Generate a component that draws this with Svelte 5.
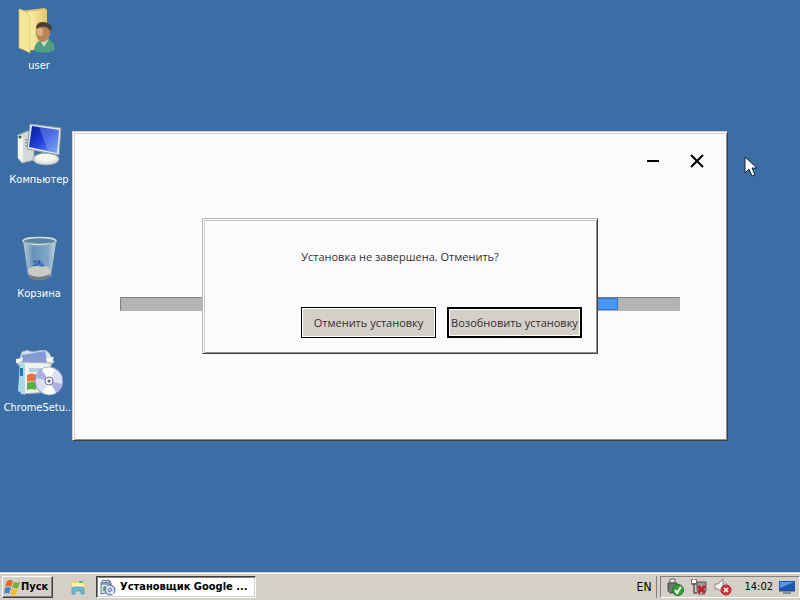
<script lang="ts">
    const shortcuts = [
        { id: 'user', label: 'user' },
        { id: 'computer', label: 'Компьютер' },
        { id: 'bin', label: 'Корзина' },
        { id: 'setup', label: 'ChromeSetu...' }
    ];

    // Position of the moving block, in percent of the track
    let block = $state({ start: 72, width: 17 });
</script>

<div class="desktop">
    <main class="workspace">
        <nav class="shortcuts">
            {#each shortcuts as item}
                <button class="shortcut">
                    <svg width="48" height="48" viewBox="0 0 48 48" aria-hidden="true">
                        {#if item.id === 'user'}
                            <defs>
                                <linearGradient id="folder" x2="1" y2="0">
                                    <stop offset="0" stop-color="#fbf3b5" />
                                    <stop offset="1" stop-color="#e5c766" />
                                </linearGradient>
                            </defs>
                            <path d="M5 3 30 0l2 2v38l-20 3z" fill="#e4c668" />
                            <path d="M13 4 31 2v38l-16 2z" fill="url(#folder)" />
                            <path d="M4 1q8 2 11 8v36q-7-4-11-5z" fill="#f5e69a" stroke="#d9bd60" stroke-width=".7" />
                            <path d="M19 43q0-8 7-11l9 0q5 3 5 10-10 5-21 1z" fill="#529e83" />
                            <path d="m25 32 4 7 5-8z" fill="#c8e0c9" />
                            <ellipse cx="28" cy="25" rx="7" ry="9" fill="#b98358" />
                            <path d="M21 21q0-8 8-7 8 1 8 8-3 1-4-2-6-3-12 1z" fill="#4b3d35" />
                            <ellipse cx="25" cy="24" rx="3" ry="4" fill="#dab184" />
                        {:else if item.id === 'computer'}
                            <defs>
                                <linearGradient id="screen" x2="1" y2="1">
                                    <stop offset="0" stop-color="#071a97" />
                                    <stop offset=".5" stop-color="#2441df" />
                                    <stop offset="1" stop-color="#69a3f3" />
                                </linearGradient>
                            </defs>
                            <path d="m3 13 10-4 6 3v26L7 41l-4-5z" fill="#d5d8d8" stroke="#98a4ad" />
                            <path d="m3 13 5 2v26l-5-5z" fill="#f4f4ee" />
                            <circle cx="5" cy="15" r="1.5" fill="#206c35" />
                            <path d="m10 18 5-1m-5 4 5-1m-5 4 5-1" stroke="#79858c" />
                            <path d="m27 30 8 1-1 9-8-1z" fill="#a8b4bb" />
                            <ellipse cx="31" cy="37" rx="13" ry="6" fill="#dfe4e3" stroke="#9aa6ad" />
                            <ellipse cx="31" cy="36" rx="10" ry="4" fill="#f5f5ef" />
                            <path d="m15 2 31 4-2 27-32-6z" fill="#e5e9ea" stroke="#8999a7" />
                            <path d="m17 4 27 4-2 23-28-6z" fill="url(#screen)" />
                            <path d="m24 5 20 3-2 23-9-2z" fill="#9ebaf3" opacity=".35" />
                        {:else if item.id === 'bin'}
                            <defs>
                                <linearGradient id="glass" x2="1" y2="0">
                                    <stop offset="0" stop-color="#b7cad4" />
                                    <stop offset=".3" stop-color="#6794bc" />
                                    <stop offset=".75" stop-color="#80a6c3" />
                                    <stop offset="1" stop-color="#c3d4da" />
                                </linearGradient>
                            </defs>
                            <path d="m8 4 5 36q9 6 23 0l5-34z" fill="url(#glass)" />
                            <path d="m12 9 4 28M37 10l-3 26" stroke="#a8c0d1" opacity=".6" />
                            <path d="m13 33 7-4 5 2 7-1 4 5-2 5q-10 5-20-1z" fill="#c9cbc4" />
                            <path d="m18 25 4 3-4 2 5-1 1-5 1 5 4 1-3-4z" fill="#5b91d6" stroke="#285fae" />
                            <path d="M13 38q11 6 22 0l-1 4q-10 5-20 0z" fill="#737e82" />
                            <ellipse cx="24.5" cy="5" rx="16.5" ry="3.5" fill="#5c84a5" stroke="#d5dedf" stroke-width="1.5" />
                            <path d="M8 6q16 8 33 0" fill="none" stroke="#929fa5" />
                        {:else}
                            <path d="m3 15 4-13q5-3 10 0l6-1 7-1 4 3 5 9-5 4z" fill="#d6e3ef" stroke="#a6b9cd" />
                            <path d="m7 5 23-4 3 12H7z" fill="#869bd4" />
                            <path d="m1 9 7-1-2 6-5-1zm30-1 8-1-2 5-5 1z" fill="#f5f5ed" />
                            <path d="m5 12 31 1v29l-30 2z" fill="#edf2ed" stroke="#a2b2bc" />
                            <path d="m5 12 5 2v31l-7-4z" fill="#abd9e9" />
                            <path d="M5 18h3v8H5z" fill="#1679bd" />
                            <path d="M14 18h15v4H14z" fill="#b5cee0" />
                            <path d="M12 25q5-3 9 0v7q-5-2-9 0z" fill="#e47142" />
                            <path d="M12 33q5-3 9 0v7q-5-2-9 0z" fill="#5cae42" />
                            <circle cx="34" cy="31" r="14" fill="#dddff4" stroke="#8391ba" />
                            <path d="m34 31-7-12q8-4 13 1zM34 31l7 12q-8 4-13-1z" fill="#fafbf5" />
                            <path d="m34 31-13-3q1-6 5-9zM34 31l13 3q-2 6-6 8z" fill="#adb0e0" />
                            <circle cx="34" cy="31" r="4" fill="#f4f5f6" stroke="#727896" />
                            <circle cx="34" cy="31" r="1.5" fill="#576687" />
                        {/if}
                    </svg>
                    <span>{item.label}</span>
                </button>
            {/each}
        </nav>

        <section class="window" aria-label="Установщик Google">
            <header class="window-controls">
                <button aria-label="Свернуть">
                    <svg width="14" height="14" viewBox="0 0 14 14"><path d="M1 7h12" /></svg>
                </button>
                <button aria-label="Закрыть">
                    <svg width="14" height="14" viewBox="0 0 14 14"><path d="m1 1 12 12M13 1 1 13" /></svg>
                </button>
            </header>
            <div class="progress" role="progressbar" aria-label="Установка">
                <div class="progress-block" style="margin-left: {block.start}%; width: {block.width}%"></div>
            </div>
        </section>

        <div class="dialog" role="dialog" aria-labelledby="question">
            <p id="question">Установка не завершена. Отменить?</p>
            <div class="dialog-actions">
                <button>Отменить установку</button>
                <button class="default">Возобновить установку</button>
            </div>
        </div>

        <!-- Mouse pointer -->
        <svg class="pointer" width="14" height="22" viewBox="0 0 14 22" aria-hidden="true">
            <path d="M1 1v16l4-4 3 7 3-1-3-7h5z" fill="#fff" stroke="#142536" />
        </svg>
    </main>

    <footer class="taskbar">
        <button class="start">
            <svg width="17" height="17" viewBox="0 0 17 17" aria-hidden="true">
                <path d="M3 2q3-2 6 0L7 8Q4 6 1 8z" fill="#e96332" />
                <path d="M10 3q3 1 6 0l-2 6q-3 1-6-1z" fill="#72ae3d" />
                <path d="M1 9q3-2 6 0l-2 6q-2-2-5 0z" fill="#4387c9" />
                <path d="M8 9q3 2 6 1l-2 6q-3 1-6-1z" fill="#f3bd35" />
            </svg>
            Пуск
        </button>
        <button class="quick" aria-label="Проводник">
            <svg width="16" height="16" viewBox="0 0 16 16">
                <path d="M1 2h6l1 2h7v9H1z" fill="#e9cf72" />
                <path d="M2 4h11l1 2v4H2z" fill="#fff3ae" />
                <path d="M9 2h4v2H9z" fill="#69b77b" />
                <path d="M2 15V10q0-2 2-2h8q2 0 2 2v5h-3v-3H5v3z" fill="#69bad5" stroke="#3b94b8" stroke-width=".6" />
            </svg>
        </button>
        <button class="task">
            <svg width="17" height="17" viewBox="0 0 17 17" aria-hidden="true">
                <path d="m2 4 2-3 3 1 3-1 2 3v9l-10 2z" fill="#dceaf4" stroke="#526b91" />
                <path d="m3 4 9-1M2 5h10" stroke="#526b91" />
                <path d="m4 8 3-1v5H4z" fill="#60aa57" />
                <circle cx="11" cy="11" r="5" fill="#cbd9f6" stroke="#4560a0" />
                <path d="m11 11-3-4m3 4 3 4" stroke="#fff" stroke-width="2" />
                <circle cx="11" cy="11" r="1.5" fill="#fff" stroke="#526b91" />
            </svg>
            <span>Установщик Google ...</span>
        </button>
        <span class="language">EN</span>
        <div class="tray">
            <svg width="18" height="18" viewBox="0 0 18 18" aria-label="Безопасное извлечение">
                <path d="M4 1h5v4H4z" fill="#e5e5e1" stroke="#666" />
                <path d="M2 5h9v8l-2 2H4l-2-2z" fill="#737573" stroke="#4b504c" />
                <circle cx="12" cy="12" r="5.5" fill="#30a039" stroke="#237829" />
                <path d="m9 12 2 3 4-6" fill="none" stroke="#fff" stroke-width="2" />
            </svg>
            <svg width="18" height="18" viewBox="0 0 18 18" aria-label="Нет сети">
                <path d="M2 1v5h4V1M4 6v9h3" fill="none" stroke="#555" stroke-width="1.5" />
                <path d="M2 2v3h4V2" fill="#fff" />
                <path d="M7 4h9v9H7z" fill="#9a9b98" stroke="#555" />
                <path d="M8 16h7" stroke="#555" />
                <path d="m8 8 7 7m0-7-7 7" stroke="#c71d2d" stroke-width="3" />
            </svg>
            <svg width="18" height="18" viewBox="0 0 18 18" aria-label="Звук отключён">
                <path d="M1 6h3l5-5v14l-5-4H1z" fill="#f2f2ef" stroke="#858582" />
                <path d="M11 4q2 2 2 4" fill="none" stroke="#999" />
                <circle cx="12" cy="12" r="5" fill="#d6373a" stroke="#ad2428" />
                <path d="m10 10 4 4m0-4-4 4" stroke="#fff" stroke-width="1.5" />
            </svg>
            <time>14:02</time>
            <svg width="16" height="16" viewBox="0 0 16 16" aria-label="Рабочий стол">
                <path d="M0 2h16v10H0z" fill="#1b58b3" />
                <path d="M1 3h14L1 9z" fill="#5797dc" />
                <path d="M0 12h16M4 14h8" stroke="#344f73" />
            </svg>
        </div>
    </footer>
</div>

<style>
:global(body) {
    margin: 0;
}

.desktop {
    display: flex;
    flex-direction: column;
    min-height: 100vh;
    background: #3a6ea5;
    font: 11px/14px "DejaVu Sans Condensed", "DejaVu Sans", sans-serif;
    color: #000;
}

button {
    font: inherit;
    color: inherit;
    border-radius: 0;
    box-sizing: border-box;
}

/* Shortcuts, window and dialog share one cell so they can overlap */
.workspace {
    position: relative;
    flex: 1;
    display: grid;
    place-items: center;
}

.shortcuts,
.window,
.dialog {
    grid-area: 1 / 1;
}

.shortcuts {
    place-self: start;
    display: flex;
    flex-direction: column;
    gap: 50px;
    padding-top: 8px;
}

.shortcut {
    display: flex;
    flex-direction: column;
    align-items: center;
    gap: 4px;
    width: 78px;
    height: 64px;
    padding: 0;
    border: 0;
    background: none;
    color: #fff;
    line-height: 12px;
    white-space: nowrap;
}

.shortcut svg {
    flex: none;
}

/* Installer window */
.window {
    box-sizing: border-box;
    width: 82%;
    min-height: 310px;
    padding: 19px 47px;
    background: #fbfbfb;
    border: 1px solid;
    border-color: #d4d0c8 #404040 #404040 #d4d0c8;
    box-shadow: inset 1px 1px #fff, inset 2px 2px #d4d0c8, inset -1px -1px #909090;
}

.window-controls {
    display: flex;
    justify-content: flex-end;
    gap: 24px;
    margin-right: -27px;
}

.window-controls button {
    display: grid;
    place-items: center;
    width: 20px;
    height: 20px;
    padding: 0;
    border: 0;
    background: none;
}

.window-controls path {
    stroke: #000;
    stroke-width: 2;
}

.progress {
    height: 12px;
    margin-top: 126px;
    background: #b4b4b4;
    border: 1px solid;
    border-color: #808080 #b4b4b4 #b4b4b4 #808080;
}

.progress-block {
    box-sizing: border-box;
    height: 100%;
    background: #4796f8;
    border: 1px solid #2875cf;
}

/* Confirmation dialog */
.dialog {
    z-index: 1;
    box-sizing: border-box;
    width: 396px;
    min-height: 136px;
    padding: 30px 15px 14px;
    background: #fbfbfb;
    border: 1px solid;
    border-color: #b8b8b8 #404040 #404040 #b8b8b8;
    box-shadow: inset 1px 1px #fff, inset 2px 2px #c8c8c8, inset -1px -1px #909090;
    font: 11px/16px "Open Sans", "Noto Sans", sans-serif;
    color: #332d35;
}

.dialog p {
    margin: 0;
    text-align: center;
}

.dialog-actions {
    display: flex;
    justify-content: flex-end;
    gap: 11px;
    margin-top: 42px;
}

.dialog-actions button {
    width: 135px;
    height: 31px;
    padding: 0;
    background: #d4d0c8;
    border: 1px solid #000;
    box-shadow: inset 0 0 0 1px #fff;
    white-space: nowrap;
}

.dialog-actions .default {
    border-width: 2px;
}

.pointer {
    position: absolute;
    left: 744px;
    top: 156px;
}

/* Taskbar */
.taskbar {
    display: flex;
    align-items: center;
    box-sizing: border-box;
    height: 28px;
    padding: 2px 0 0 2px;
    background: #d4d0c8;
    box-shadow: inset 0 1px #d4d0c8, inset 0 2px #fff;
}

.start,
.task {
    display: flex;
    align-items: center;
    height: 22px;
    border: 1px solid;
    font-weight: bold;
    white-space: nowrap;
}

.start {
    width: 51px;
    padding: 0 1px;
    background: #d4d0c8;
    border-color: #fff #404040 #404040 #fff;
    box-shadow: inset -1px -1px #808080;
}

.quick {
    display: flex;
    margin: 0 10px 0 17px;
    padding: 0;
    border: 0;
    background: none;
}

.task {
    gap: 4px;
    width: 160px;
    padding: 0 2px;
    background: #fff;
    border-color: #404040 #fff #fff #404040;
    box-shadow: inset 1px 1px #808080, inset -1px -1px #d4d0c8;
}

.start svg,
.task svg {
    flex: none;
}

.language {
    margin-left: auto;
    padding: 4px 5px;
    border-right: 1px solid #808080;
    font-size: 12px;
}

.tray {
    display: flex;
    align-items: center;
    gap: 6px;
    box-sizing: border-box;
    height: 22px;
    margin-left: 3px;
    padding: 0 4px 0 5px;
    border: 1px solid;
    border-color: #808080 #fff #fff #808080;
}

.tray time {
    margin-left: 6px;
}
</style>
